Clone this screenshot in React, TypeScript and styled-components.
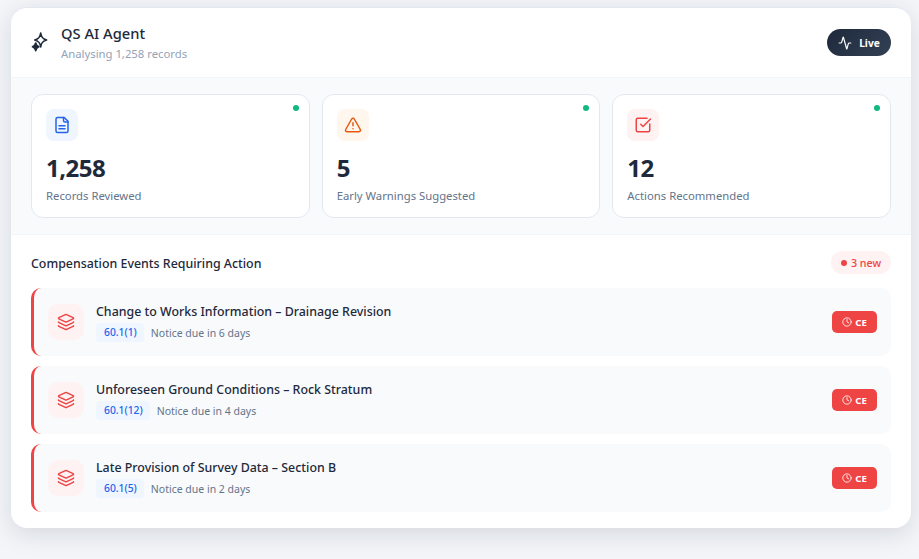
import React from "react";
import styled, { createGlobalStyle } from "styled-components";
import { TriangleAlert, SquareCheckBig, Layers, Clock, Activity } from "lucide-react";

const Global = createGlobalStyle`
  html, body { margin: 0; padding: 0; }
  body {
    background: #f3f5f9;
    font-family: "Noto Sans", "Liberation Sans", sans-serif;
    height: 559px;
    overflow: hidden;
  }
`;

const Page = styled.div`
  padding: 7px 8px 31px 11px;
  height: 559px;
  box-sizing: border-box;
`;

const Card = styled.div`
  background: #fff;
  border-radius: 16px;
  border-top: 1px solid #e2e8f0;
  box-shadow: 0 6px 24px rgba(15, 23, 42, 0.13);
  overflow: hidden;
  height: 521px;
  box-sizing: border-box;
`;

const Header = styled.header`
  height: 70px;
  box-sizing: border-box;
  padding: 0 20px 0 17px;
  display: flex;
  align-items: center;
  justify-content: space-between;
  border-bottom: 1px solid #f1f5f9;
`;

const Brand = styled.div`
  display: flex;
  align-items: center;
  gap: 9px;
`;

const Title = styled.div`
  font-size: 14.7px;
  font-weight: 500;
  color: #1e293b;
  line-height: 18px;
`;

const Sub = styled.div`
  font-size: 11.3px;
  color: #94a3b8;
  line-height: 16px;
  margin-top: 4px;
`;

const LivePill = styled.div`
  width: 64px;
  height: 27px;
  border-radius: 14px;
  background: linear-gradient(135deg, #1e293b, #334155);
  color: #fff;
  font-size: 10.2px;
  font-weight: 700;
  display: flex;
  align-items: center;
  justify-content: center;
  gap: 7px;
`;

const Stats = styled.section`
  background: #f8fafc;
  padding: 16px 20px;
  border-bottom: 1px solid #f1f5f9;
  display: grid;
  grid-template-columns: repeat(3, 1fr);
  gap: 12px;
`;

const Stat = styled.div`
  position: relative;
  background: #fff;
  border: 1px solid #e2e8f0;
  border-radius: 12px;
  padding: 14px;
  height: 124px;
  box-sizing: border-box;
`;

const Dot = styled.span`
  position: absolute;
  top: 10px;
  right: 10px;
  width: 6px;
  height: 6px;
  border-radius: 50%;
  background: #10b981;
`;

const IconBox = styled.div<{ $bg: string; $fg: string; $size: number; $radius: number }>`
  width: ${(p) => p.$size}px;
  height: ${(p) => p.$size}px;
  border-radius: ${(p) => p.$radius}px;
  background: ${(p) => p.$bg};
  color: ${(p) => p.$fg};
  display: flex;
  align-items: center;
  justify-content: center;
  flex-shrink: 0;
`;

const Value = styled.div`
  margin-top: 9px;
  font-size: 24px;
  letter-spacing: -0.5px;
  line-height: 36px;
  font-weight: 700;
  color: #1e293b;
`;

const Label = styled.div`
  font-size: 11.3px;
  line-height: 18px;
  color: #64748b;
  margin-top: 1px;
`;

const Events = styled.section`
  padding: 16px 20px;
`;

const EventsHead = styled.div`
  display: flex;
  align-items: center;
  justify-content: space-between;
  height: 23px;
  margin-bottom: 14px;
`;

const EventsTitle = styled.div`
  font-size: 12.4px;
  font-weight: 500;
  color: #1e293b;
  padding-top: 1px;
`;

const NewBadge = styled.div`
  width: 60px;
  height: 23px;
  box-sizing: border-box;
  border-radius: 12px;
  background: #fef2f2;
  color: #ef4444;
  font-size: 10.7px;
  font-weight: 500;
  display: flex;
  align-items: center;
  justify-content: center;
  gap: 4px;
`;

const RedDot = styled.span`
  width: 6px;
  height: 6px;
  border-radius: 50%;
  background: #ef4444;
`;

const List = styled.div`
  display: flex;
  flex-direction: column;
  gap: 10px;
`;

const Row = styled.div`
  height: 68px;
  box-sizing: border-box;
  background: #f8fafc;
  border-radius: 10px;
  border-left: 3px solid #ef4444;
  padding: 0 14px;
  display: flex;
  align-items: center;
  gap: 12px;
`;

const RowBody = styled.div`
  flex: 1;
  min-width: 0;
  padding-top: 1px;
`;

const RowTitle = styled.div`
  font-size: 12.4px;
  font-weight: 500;
  color: #1e293b;
  line-height: 18px;
`;

const Meta = styled.div`
  display: flex;
  align-items: center;
  gap: 7px;
  margin-top: 2px;
`;

const Clause = styled.span`
  background: #eff6ff;
  color: #2563eb;
  font-size: 10.3px;
  font-weight: 500;
  line-height: 15px;
  padding: 2px 7px 2px 8px;
  border-radius: 4px;
`;

const Due = styled.span`
  font-size: 10.5px;
  color: #64748b;
`;

const CeTag = styled.div`
  width: 45px;
  height: 22px;
  border-radius: 5px;
  background: #ef4444;
  color: #fff;
  font-size: 9.6px;
  font-weight: 700;
  display: flex;
  align-items: center;
  justify-content: center;
  gap: 3px;
`;

const DocIcon = ({ size, strokeWidth }: { size: number; strokeWidth: number }) => (
  <svg width={size} height={size} viewBox="0 0 24 24" fill="none" stroke="currentColor" strokeWidth={strokeWidth} strokeLinecap="round" strokeLinejoin="round">
    <path d="M15 2H6a2 2 0 0 0-2 2v16a2 2 0 0 0 2 2h12a2 2 0 0 0 2-2V7Z" />
    <path d="M14 2v4a2 2 0 0 0 2 2h4" />
    <path d="M8 13h8" />
    <path d="M8 17h8" />
  </svg>
);

const stats = [
  { icon: DocIcon, bg: "#eff6ff", fg: "#2563eb", value: "1,258", label: "Records Reviewed" },
  { icon: TriangleAlert, bg: "#fff7ed", fg: "#ea580c", value: "5", label: "Early Warnings Suggested" },
  { icon: SquareCheckBig, bg: "#fef2f2", fg: "#ef4444", value: "12", label: "Actions Recommended" },
];

const events = [
  { title: "Change to Works Information – Drainage Revision", clause: "60.1(1)", due: "Notice due in 6 days" },
  { title: "Unforeseen Ground Conditions – Rock Stratum", clause: "60.1(12)", due: "Notice due in 4 days" },
  { title: "Late Provision of Survey Data – Section B", clause: "60.1(5)", due: "Notice due in 2 days" },
];

const SparkIcon = () => (
  <svg width="24" height="24" viewBox="0 3 24 24" fill="none" stroke="#1e293b" strokeWidth="1.7" strokeLinejoin="round">
    <path d="M12.7 5.2 C13.2 9 14.3 10.7 18.6 12 C14.3 13.3 13.2 15 12.7 18.8 C12.2 15 11.1 13.3 6.8 12 C11.1 10.7 12.2 9 12.7 5.2 Z" />
    <path d="M7.7 15 C8 17 8.7 18 10.9 18.7 C8.7 19.4 8 20.4 7.7 22.6 C7.4 20.4 6.7 19.4 4.5 18.7 C6.7 18 7.4 17 7.7 15 Z" fill="#1e293b" />
  </svg>
);

export default function App() {
  return (
    <Page>
      <Global />
      <Card>
        <Header>
          <Brand>
            <SparkIcon />
            <div>
              <Title>QS AI Agent</Title>
              <Sub>Analysing 1,258 records</Sub>
            </div>
          </Brand>
          <LivePill>
            <Activity size={14} strokeWidth={2} />
            Live
          </LivePill>
        </Header>
        <Stats>
          {stats.map((s) => (
            <Stat key={s.label}>
              <Dot />
              <IconBox $bg={s.bg} $fg={s.fg} $size={32} $radius={8}>
                <s.icon size={18} strokeWidth={2} />
              </IconBox>
              <Value>{s.value}</Value>
              <Label>{s.label}</Label>
            </Stat>
          ))}
        </Stats>
        <Events>
          <EventsHead>
            <EventsTitle>Compensation Events Requiring Action</EventsTitle>
            <NewBadge>
              <RedDot />3 new
            </NewBadge>
          </EventsHead>
          <List>
            {events.map((e) => (
              <Row key={e.title}>
                <IconBox $bg="#fef2f2" $fg="#ef4444" $size={36} $radius={10}>
                  <Layers size={18} strokeWidth={2} />
                </IconBox>
                <RowBody>
                  <RowTitle>{e.title}</RowTitle>
                  <Meta>
                    <Clause>{e.clause}</Clause>
                    <Due>{e.due}</Due>
                  </Meta>
                </RowBody>
                <CeTag>
                  <Clock size={10} strokeWidth={2} />
                  CE
                </CeTag>
              </Row>
            ))}
          </List>
        </Events>
      </Card>
    </Page>
  );
}
